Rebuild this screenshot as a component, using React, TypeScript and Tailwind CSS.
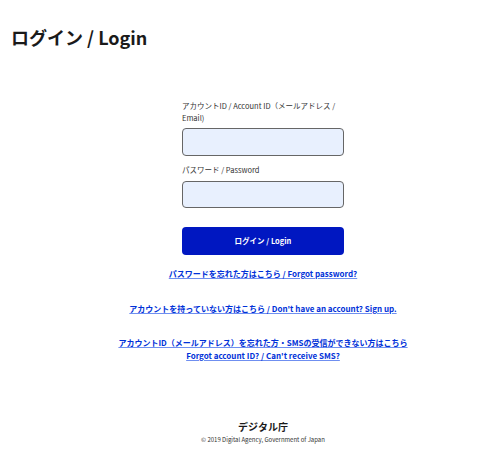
import React from 'react';

const font = { fontFamily: '"Noto Sans CJK JP", "Noto Sans", sans-serif' };

export default function App() {
  return (
    <div className="w-[500px] h-[459px] bg-white text-[#1a1a1a]" style={font}>
      <h1 className="pt-[25px] pl-[11px] text-[18px] leading-[24px] font-bold">ログイン / Login</h1>

      <div className="pl-[26px] flex flex-col items-center">
        <form className="w-[162px] mt-[51px] flex flex-col" onSubmit={(e) => e.preventDefault()}>
          <label className="text-[7.5px] leading-[12px] text-[#333]">
            アカウントID / Account ID（メールアドレス / Email)
          </label>
          <input className="mt-[4px] h-[28px] rounded-[4px] border border-[#666] bg-[#e8f0fe]" />
          <label className="mt-[8px] text-[7.5px] leading-[12px] text-[#333]">パスワード / Password</label>
          <input type="password" className="mt-[5px] h-[27px] rounded-[4px] border border-[#666] bg-[#e8f0fe]" />
          <button className="mt-[19px] h-[28px] rounded-[4px] bg-[#0017c1] text-white text-[7.5px] font-bold">
            ログイン / Login
          </button>
        </form>

        <a href="#" className="mt-[13px] text-[8px] leading-[12px] font-bold text-[#0031d8] underline decoration-[#6f8ff0]">
          パスワードを忘れた方はこちら / Forgot password?
        </a>
        <a href="#" className="mt-[23px] text-[8px] leading-[12px] font-bold text-[#0031d8] underline decoration-[#6f8ff0]">
          アカウントを持っていない方はこちら / Don't have an account? Sign up.
        </a>
        <a href="#" className="mt-[21px] text-[8px] leading-[13px] font-bold text-[#0031d8] underline decoration-[#6f8ff0] text-center">
          アカウントID（メールアドレス）を忘れた方・SMSの受信ができない方はこちら
          <br />
          Forgot account ID? / Can't receive SMS?
        </a>

        <div className="mt-[58px] flex flex-col items-center">
          <div className="text-[10px] leading-[14px] font-bold">デジタル庁</div>
          <div className="text-[6px] leading-[12px] text-[#333]">© 2019 Digital Agency, Government of Japan</div>
        </div>
      </div>
    </div>
  );
}
